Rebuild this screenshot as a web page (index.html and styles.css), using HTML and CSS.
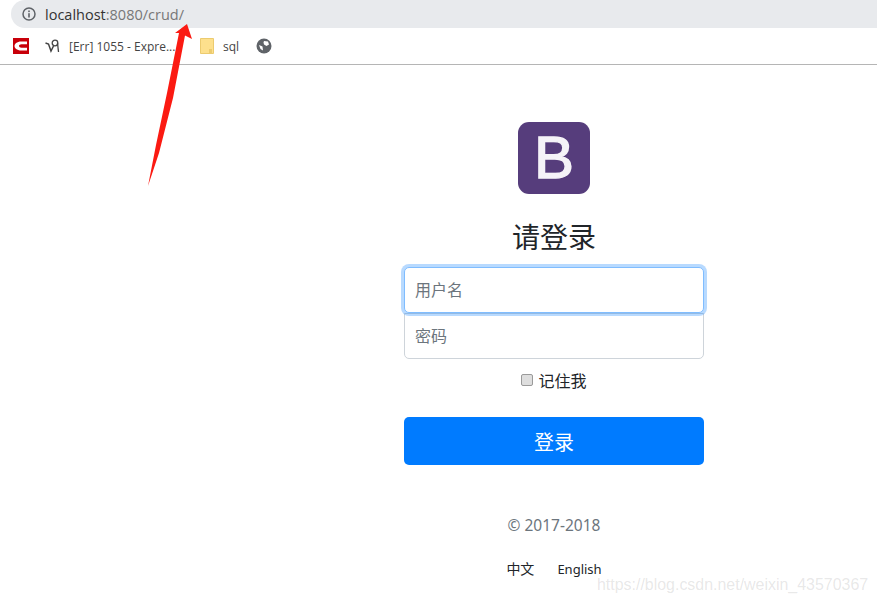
FILE: index.html
```html
<!DOCTYPE html>
<html lang="zh-CN">
<head>
  <title>登录</title>
  <meta charset="utf-8">
  <meta name="viewport" content="width=device-width, initial-scale=1">
  <link rel="stylesheet" href="styles.css">
</head>
<body>
  <div class="address-row">
    <div class="address">
      <svg class="info-icon" width="14" height="14" viewBox="0 0 14 14">
        <circle cx="7" cy="7" r="6" fill="none" stroke="#5f6368" stroke-width="1.5"/>
        <rect x="6.200" y="6.200" width="1.600" height="4.300" fill="#5f6368"/>
        <rect x="6.200" y="3.500" width="1.600" height="1.600" fill="#5f6368"/>
      </svg>
      <span class="host">localhost</span><span class="path">:8080/crud/</span>
    </div>
  </div>
  <div class="bookmarks">
    <svg class="bm-icon" width="16" height="16" viewBox="0 0 16 16">
      <rect width="16" height="16" fill="#c8000a"/>
      <path d="M14 3.500H8.500C3.500 3.500 1.500 6 1.500 8C1.500 10 3.500 12.500 8.500 12.500H14V9.700H8.500C7 9.700 6 8.800 6 8C6 7.200 7 6.300 8.500 6.300H14Z" fill="#fff"/>
    </svg>
    <svg class="bm-icon mysql" width="16" height="16" viewBox="0 0 16 16">
      <path d="M.5 5L3.500 6L6 13L8.500 8" fill="none" stroke="#444" stroke-width="1.500"/>
      <circle cx="10" cy="5" r="2.800" fill="none" stroke="#444" stroke-width="1.300"/>
      <path d="M12.500 5L13.500 14" fill="none" stroke="#444" stroke-width="1.300"/>
    </svg>
    <span class="bm-label err">[Err] 1055 - Expre...</span>
    <svg class="bm-icon folder" width="14" height="16" viewBox="0 0 14 16">
      <path d="M.5.500H13.500V15.500H.5Z" fill="#fde08d" stroke="#eccb6f"/>
      <rect x="9" y="11" width="3" height="4" fill="#eccb6f"/>
    </svg>
    <span class="bm-label sql">sql</span>
    <svg class="bm-icon globe" width="16" height="16" viewBox="0 0 16 16">
      <circle cx="8" cy="8" r="7.500" fill="#5f6368"/>
      <path d="M8 3L12 3.500L13 6.500L10.500 8L8 6.500L7.500 4.500ZM3 7L6.500 8.500L7 12.500L4.500 11Z" fill="#fff"/>
    </svg>
  </div>

  <main class="page">
    <form class="signin">
      <div class="logo">B</div>
      <h1 class="signin-title">请登录</h1>
      <input class="field field-focus" type="text" placeholder="用户名">
      <input class="field" type="password" placeholder="密码">
      <label class="remember"><input class="remember-box" type="checkbox"> 记住我</label>
      <button class="submit" type="button">登录</button>
      <p class="copyright">© 2017-2018</p>
      <div class="langs">
        <a class="lang" href="#">中文</a>
        <a class="lang lang-en" href="#">English</a>
      </div>
    </form>
  </main>

  <svg class="arrow" width="60" height="170" viewBox="0 0 60 170">
    <path d="M40 1L45 16L38 12.500L26 75L12 130L1 163L9 122L20 70L32 10L28 10Z" fill="#fb1a12"/>
  </svg>
  <div class="watermark">https://blog.csdn.net/weixin_43570367</div>
</body>
</html>
```

FILE: styles.css
```css
*, *::before, *::after {
  box-sizing: border-box;
}

body {
  margin: 0;
  min-height: 603px;
  overflow: hidden;
  position: relative;
  background-color: #fff;
  color: #212529;
  font-family: "Noto Sans", "Noto Sans CJK SC", sans-serif;
  font-size: 16px;
}

.address-row {
  padding-left: 11px;
  background-color: #fff;
}

.address {
  display: flex;
  align-items: center;
  height: 28px;
  padding-left: 11px;
  border-radius: 14px 0 0 14px;
  background-color: #e8eaed;
  font-size: 14.500px;
  font-family: "Open Sans", sans-serif;
}

.info-icon {
  margin-right: 9px;
}

.host {
  color: #333;
}

.path {
  color: #777;
}

.bookmarks {
  display: flex;
  align-items: center;
  height: 37px;
  padding-left: 13px;
  border-bottom: 1px solid #b5b5b5;
  font-size: 12px;
  font-family: "Open Sans", sans-serif;
}

.mysql {
  margin-left: 16px;
}

.bm-label {
  color: #444;
}

.err {
  margin-left: 8px;
  width: 131px;
  white-space: nowrap;
}

.sql {
  margin-left: 9px;
}

.folder {
  flex-shrink: 0;
}

.globe {
  margin-left: 17px;
}

.page {
  padding: 57px 0 0 404px;
}

.signin {
  display: flex;
  flex-direction: column;
  align-items: center;
  width: 300px;
}

.logo {
  display: flex;
  align-items: center;
  justify-content: center;
  width: 72px;
  height: 72px;
  border-radius: 11px;
  background-color: #563d7c;
  color: #f5f3f8;
  font-family: "Liberation Sans", sans-serif;
  font-size: 60px;
  line-height: 1;
  -webkit-text-stroke: 1.400px #f5f3f8;
}

.signin-title {
  margin: 24px 0 11px;
  font-size: 28px;
  font-weight: 400;
  line-height: 38px;
}

.field {
  display: block;
  width: 100%;
  height: 46px;
  padding: 0 10px;
  border: 1px solid #ced4da;
  border-radius: 0 0 5px 5px;
  font-family: inherit;
  font-size: 16px;
}

.field::placeholder {
  color: #6c757d;
}

.field-focus {
  position: relative;
  z-index: 1;
  border-color: #80bdff;
  border-radius: 5px;
  box-shadow: 0 0 0 3px rgba(0, 123, 255, .28);
}

.remember {
  display: flex;
  align-items: center;
  gap: 5px;
  height: 24px;
  margin: 9px 0 25px;
}

.remember-box {
  appearance: none;
  width: 12px;
  height: 12px;
  margin: 0;
  border: 1px solid #9a9a9a;
  border-radius: 2px;
  background-color: #dedede;
}

.submit {
  width: 100%;
  height: 48px;
  border: none;
  border-radius: 5px;
  background-color: #007bff;
  color: #fff;
  font-family: inherit;
  font-size: 20px;
}

.copyright {
  margin: 48px 0 0;
  color: #6c757d;
  line-height: 24px;
  font-size: 15.500px;
}

.langs {
  display: flex;
  align-items: center;
  gap: 23px;
  margin-top: 20px;
  font-size: 14px;
  line-height: 24px;
}

.lang {
  color: #212529;
  text-decoration: none;
}

.lang-en {
  font-size: 13px;
}

.arrow {
  position: absolute;
  top: 23px;
  left: 147px;
}

.watermark {
  position: absolute;
  top: 575px;
  left: 597px;
  color: rgba(120, 120, 120, .18);
  font-family: "Liberation Sans", sans-serif;
  font-size: 15.950px;
  line-height: 20px;
  white-space: nowrap;
}
```
